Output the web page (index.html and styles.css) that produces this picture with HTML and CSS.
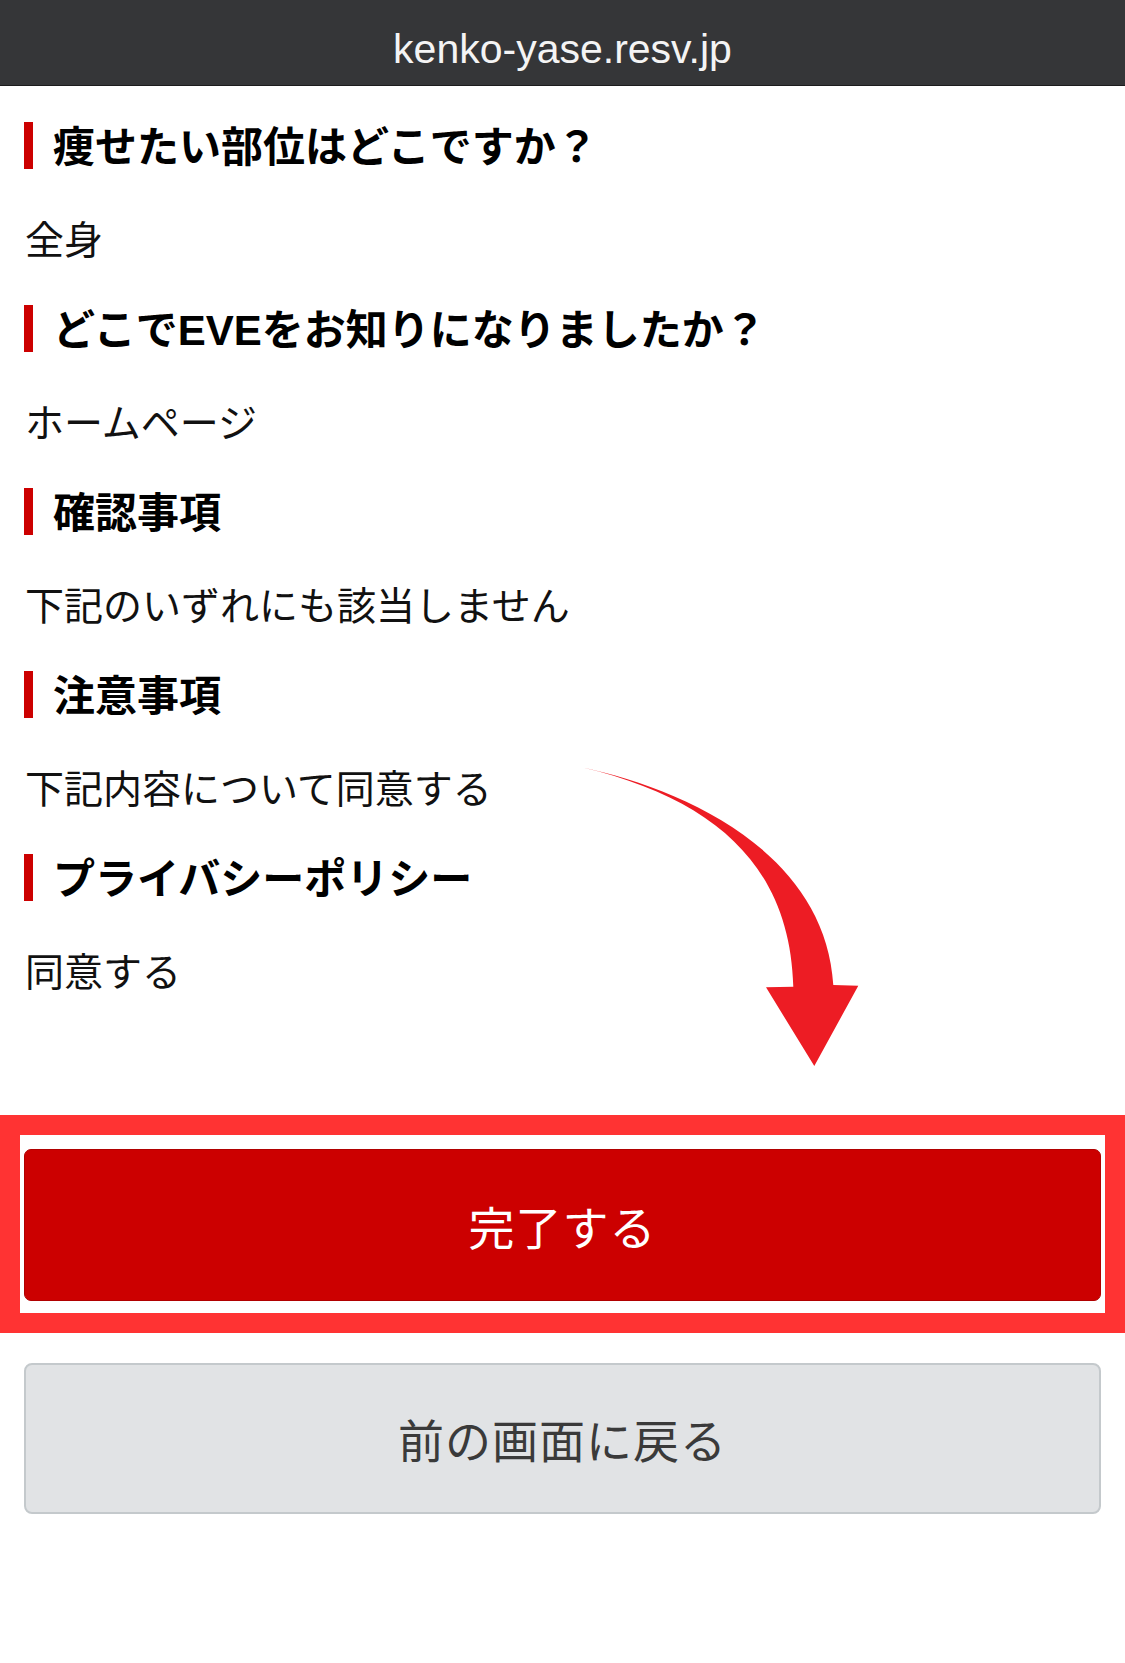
FILE: index.html
```html
<!DOCTYPE html>
<html lang="ja">
<head>
<meta charset="utf-8">
<title>kenko-yase.resv.jp</title>
<link rel="stylesheet" href="styles.css">
</head>
<body>
<div class="page">
  <header class="urlbar">kenko-yase.resv.jp</header>
  <main class="content">
    <section class="item">
      <h2 class="q">痩せたい部位はどこですか？</h2>
      <p class="a">全身</p>
    </section>
    <section class="item">
      <h2 class="q">どこでEVEをお知りになりましたか？</h2>
      <p class="a">ホームページ</p>
    </section>
    <section class="item">
      <h2 class="q">確認事項</h2>
      <p class="a">下記のいずれにも該当しません</p>
    </section>
    <section class="item">
      <h2 class="q">注意事項</h2>
      <p class="a">下記内容について同意する</p>
    </section>
    <section class="item">
      <h2 class="q">プライバシーポリシー</h2>
      <p class="a">同意する</p>
    </section>

    <div class="actions">
      <div class="primary-wrap">
        <button class="btn btn-primary" type="button">完了する</button>
        <div class="highlight"></div>
      </div>
      <button class="btn btn-back" type="button">前の画面に戻る</button>
    </div>
  </main>

  <svg class="arrow" width="310" height="330" viewBox="0 0 310 330" xmlns="http://www.w3.org/2000/svg">
    <path fill="#ed1c24" d="M11.7 17.3 C110 38 255 100 263.3 235 L288.3 235.7 L244.3 316 L196 237.3 L223.3 236.7 C220 120 150 50 11.7 17.3 Z"/>
  </svg>
</div>
</body>
</html>
```

FILE: styles.css
```css
html, body {
  margin: 0;
  padding: 0;
  background: #ffffff;
}

body {
  font-family: "Noto Sans CJK JP", "Noto Sans", sans-serif;
  color: #111111;
}

.page {
  position: relative;
  width: 1125px;
  min-height: 1663px;
}

.urlbar {
  box-sizing: border-box;
  height: 86px;
  padding-top: 13px;
  line-height: 72px;
  background: #353638;
  border-bottom: 1px solid #1c1c1d;
  color: #f4f4f4;
  font-family: "Liberation Sans", Arial, sans-serif;
  font-size: 41px;
  text-align: center;
}

.content {
  padding: 36px 24px 0;
}

.item {
  margin: 0;
}

.q {
  margin: 0;
  height: 47px;
  box-sizing: border-box;
  padding: 4px 0 0 20px;
  line-height: 43px;
  border-left: 9px solid #cc0000;
  font-family: "Liberation Sans", "Noto Sans CJK JP", sans-serif;
  font-size: 42px;
  font-weight: 700;
  color: #000000;
  white-space: nowrap;
}

.a {
  margin: 40px 0 40px 0;
  padding-left: 1px;
  line-height: 56px;
  font-size: 39px;
  font-weight: 400;
  color: #111111;
}

.actions {
  display: flex;
  flex-direction: column;
  gap: 62px;
  margin-top: 152px;
}

.primary-wrap {
  position: relative;
}

.btn {
  display: block;
  width: 100%;
  box-sizing: border-box;
  margin: 0;
  font-family: "Noto Sans CJK JP", "Noto Sans", sans-serif;
  font-size: 46px;
  font-weight: 400;
  letter-spacing: 1px;
  text-align: center;
  cursor: pointer;
}

.btn-primary {
  height: 152px;
  line-height: 148px;
  background: #cc0000;
  border: 1px solid #b00000;
  border-radius: 7px;
  color: #ffffff;
}

.btn-back {
  height: 151px;
  line-height: 145px;
  background: #e1e3e5;
  border: 2px solid #c4c9cc;
  border-radius: 8px;
  color: #3a3a3a;
}

.highlight {
  position: absolute;
  top: -34px;
  left: -24px;
  right: -24px;
  bottom: -32px;
  border: 20px solid #ff3333;
  pointer-events: none;
}

.arrow {
  position: absolute;
  left: 570px;
  top: 750px;
  display: block;
}
```
